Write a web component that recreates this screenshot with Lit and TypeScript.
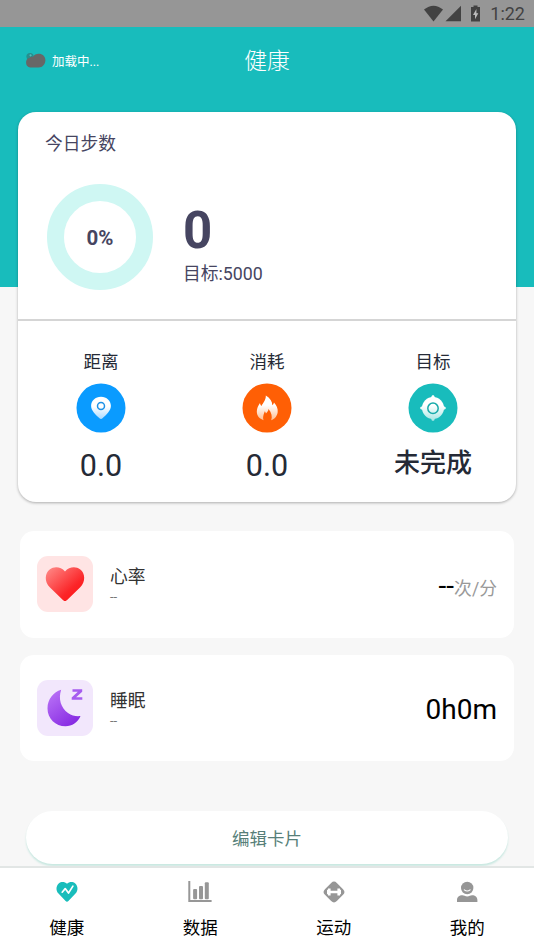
import { LitElement, html, css, svg } from "lit";
import { customElement } from "lit/decorators.js";

const weatherIcon = svg`<svg width="22" height="18" viewBox="0 0 22 18">
  <circle cx="5" cy="5.500" r="3.600" fill="#278e8e"/>
  <circle cx="5.500" cy="4.200" r="1" fill="#52bcbb"/>
  <path d="M5.200 16.500a5 5 0 0 1-.6-9.700C5.500 5.600 6.700 5.500 7.800 5.900 9.100 3.600 11.200 2.700 13.700 2.700c3.700 0 6.700 2.700 6.700 6.300 0 4.300-2.900 7.500-6.700 7.500z" fill="#676767"/>
  <circle cx="5.600" cy="4.600" r=".8" fill="#52bcbb"/></svg>`;

const pinIcon = svg`<svg width="50" height="50" viewBox="0 0 50 50">
  <defs><linearGradient id="p" x1="0" y1="0" x2="0" y2="1"><stop offset=".45" stop-color="#fff"/><stop offset="1" stop-color="#a9d9ff"/></linearGradient></defs>
  <circle cx="25" cy="25" r="24.500" fill="#0a9bff"/>
  <path d="M25 13.700c5.700 0 9.900 4 9.900 9 0 5.200-4.900 9.200-8.400 12.600-.9.900-2.100.9-3 0-3.500-3.400-8.400-7.400-8.400-12.600 0-5 4.200-9 9.900-9z" fill="url(#p)"/>
  <circle cx="25" cy="23" r="3.500" fill="none" stroke="#1d91e6" stroke-width="1.500"/></svg>`;

const flameIcon = svg`<svg width="50" height="50" viewBox="0 0 50 50">
  <defs><linearGradient id="f" x1="0" y1="0" x2="0" y2="1"><stop offset=".4" stop-color="#fff"/><stop offset="1" stop-color="#ffbd91"/></linearGradient></defs>
  <circle cx="25" cy="25" r="24.500" fill="#ff5f05"/>
  <path d="M23.800 12.500c4.200 2.600 6.600 6 6.500 9.700 1-.8 1.500-1.700 1.700-2.700 2.500 2.800 4.100 6.100 3.700 9.500-.4 4.100-3 7.100-6.500 8.200 1.300-3.700.4-7.300-2.700-11.200-.3 2.200-1.200 3.200-2.600 4.400-.2-1-.6-1.600-1.100-2.200-.8 2.700-2.400 5.300-1.200 9-4.200-1.300-6.800-4.400-6.800-8.600 0-3.300 1.500-6 3.200-8.500.2 1.400.7 2.300 1.500 3 1.500-3.400 4.600-6 4.300-10.600z" fill="url(#f)"/></svg>`;

const targetIcon = svg`<svg width="50" height="50" viewBox="0 0 50 50">
  <defs><linearGradient id="t" gradientUnits="userSpaceOnUse" x1="0" y1="12" x2="0" y2="38"><stop offset=".4" stop-color="#fff"/><stop offset="1" stop-color="#a2e5e3"/></linearGradient></defs>
  <circle cx="25" cy="25" r="24.500" fill="#18bcbc"/>
  <g fill="url(#t)">
    <circle cx="25" cy="25" r="11"/>
    <path d="M25 12.200c1 0 1.400.7 1.600 1.600.2 1.200 1.300 1.700 2.600 2.200l4.800 4.800c.5 1.300 1 2.400 2.200 2.600.9.200 1.600.6 1.600 1.600s-.7 1.400-1.600 1.600c-1.200.2-1.700 1.300-2.200 2.600L29.200 34c-1.300.5-2.400 1-2.600 2.200-.2.900-.6 1.600-1.600 1.600s-1.400-.7-1.600-1.600c-.2-1.200-1.300-1.700-2.600-2.200L16 29.200c-.5-1.300-1-2.400-2.200-2.600-.9-.2-1.600-.6-1.600-1.600s.7-1.400 1.600-1.600c1.200-.2 1.700-1.300 2.200-2.600l4.800-4.800c1.300-.5 2.400-1 2.600-2.200.2-.9.600-1.600 1.600-1.600z"/>
  </g>
  <circle cx="25" cy="25.300" r="5.200" fill="none" stroke="#18aaaa" stroke-width="1.500"/></svg>`;

const heartIcon = svg`<svg width="56" height="56" viewBox="0 0 56 56">
  <defs><linearGradient id="h" x1="0" y1=".1" x2=".8" y2=".9"><stop stop-color="#ff8583"/><stop offset=".75" stop-color="#fb2528"/><stop offset="1" stop-color="#ff1719"/></linearGradient></defs>
  <path d="M28 45.100c-1 0-1.500-.5-2.100-1L13 31.600C7 25.500 7.900 17.300 12.700 13.500c4.800-3.700 11.200-2.600 15.300 1.900 4.100-4.500 10.500-5.600 15.300-1.900 4.800 3.800 5.700 12-.3 18.100L30.100 44.100c-.6.500-1.100 1-2.100 1z" fill="url(#h)"/></svg>`;

const moonIcon = svg`<svg width="56" height="56" viewBox="0 0 56 56">
  <defs><linearGradient id="m" x1="0" y1="0" x2=".7" y2="1"><stop stop-color="#bd78f8"/><stop offset="1" stop-color="#872be2"/></linearGradient></defs>
  <path d="M24.200 9.800C21 19 24 28 31 33c4 2.900 8 3.500 12.500 3.100C41 42.500 35 46.300 28.500 46.300 18.500 46.300 10.500 38.500 10.500 28.500c0-9.200 6-16.500 13.700-18.700z" fill="url(#m)"/>
  <path d="M35.500 9.300h9.700v2.400l-6.100 5.600h6.200v2.500H34.700v-2.400l6.100-5.600h-5.300z" fill="#a65cef"/></svg>`;

const healthTab = svg`<svg width="26" height="26" viewBox="0 0 26 26">
  <path d="M13 22.700c-.6 0-1-.3-1.400-.7L4.500 14.600C1.600 11.500 2 6.700 4.700 4.400c2.600-2.200 6-1.900 8.300.3 2.300-2.200 5.700-2.500 8.300-.3 2.700 2.300 3.100 7.100.2 10.200L14.400 22c-.4.400-.8.700-1.400.7z" fill="#19bdbb"/>
  <path d="M8.200 13.200l3-3.600 3.300 4.500 4.400-7" fill="none" stroke="#fff" stroke-width="1.700" stroke-linecap="round" stroke-linejoin="round"/></svg>`;

const dataTab = svg`<svg width="26" height="26" viewBox="0 0 26 26" fill="#979797">
  <path d="M1.300 2h2v19h21.300v2H1.300z"/>
  <rect x="6.100" y="10" width="4" height="10.200" rx="1"/><rect x="12" y="7" width="4" height="13.200" rx="1"/><rect x="17.800" y="3.200" width="4" height="17" rx="1"/></svg>`;

const sportTab = svg`<svg width="26" height="26" viewBox="0 0 26 26">
  <rect x="4.600" y="4.600" width="16.800" height="16.800" rx="4" transform="rotate(45 13 13)" fill="#969696"/>
  <path d="M6 10.700h1V9.600h2.600v2.200h6.800V9.600H19v1.100h1v4.600h-1v1.100h-2.600v-2.200H9.600v2.200H7v-1.100H6z" fill="#fff"/></svg>`;

const mineTab = svg`<svg width="26" height="26" viewBox="0 0 26 26">
  <circle cx="13.200" cy="9" r="6.200" fill="#969696"/>
  <path d="M10.300 10.800q2.900 2.400 5.800 0" fill="none" stroke="#fff" stroke-width="1.100" stroke-linecap="round"/>
  <path d="M3 23v-2c0-2.800 2.200-4.700 5.400-4.700 1.500 0 2.900 1.200 4.800 1.200s3.300-1.200 4.800-1.200c3.200 0 5.400 1.900 5.400 4.700v2z" fill="#969696"/></svg>`;

const metrics = [
  { label: "距离", icon: pinIcon, value: "0.0", kind: "number" },
  { label: "消耗", icon: flameIcon, value: "0.0", kind: "number" },
  { label: "目标", icon: targetIcon, value: "未完成", kind: "word" },
];

const cards = [
  { label: "心率", icon: heartIcon, tone: "rose", value: "--", unit: "次/分" },
  { label: "睡眠", icon: moonIcon, tone: "violet", value: "0h0m", unit: "" },
];

const tabs = [
  { label: "健康", icon: healthTab },
  { label: "数据", icon: dataTab },
  { label: "运动", icon: sportTab },
  { label: "我的", icon: mineTab },
];

@customElement("app-root")
export class AppRoot extends LitElement {
  static styles = css`
    :host {
      display: flex;
      flex-direction: column;
      width: 534px;
      height: 950px;
      overflow: hidden;
      box-sizing: border-box;
      font-family: Roboto, "Noto Sans CJK SC", sans-serif;
      background: #f7f7f7;
      color: #252a36;
    }
    * { box-sizing: border-box; }
    svg { display: block; flex: none; }
    .status {
      height: 27px;
      flex: none;
      display: flex;
      justify-content: flex-end;
      align-items: center;
      padding-right: 9px;
      background: #969696;
      color: #424242;
      font-size: 18px;
      line-height: 27px;
    }
    .clock { margin-left: 8px; }
    .main {
      flex: none;
      height: 839px;
      background: linear-gradient(#18bcbc 0 259.500px, #f7f7f7 259.500px);
      overflow: hidden;
    }
    .header {
      height: 85px;
      display: grid;
      grid-template-columns: 1fr auto 1fr;
      align-items: start;
      padding: 17px 25px 0;
      color: #fff;
    }
    .weather { display: flex; align-items: center; gap: 5px; height: 32px; font-size: 12.500px; }
    .title { font-size: 22.800px; line-height: 34px; padding-top: 1px; font-weight: 300; }
    .summary {
      width: 498px;
      height: 390px;
      margin-left: 18px;
      background: #fff;
      border-radius: 18px;
      box-shadow: 0 1px 3px rgba(0, 0, 0, .3);
    }
    .steps { height: 209px; padding: 19px 27px 0; border-bottom: 2px solid #d5d5d5; color: #464561; }
    .caption { font-size: 17.800px; line-height: 26px; }
    .progress { display: flex; align-items: center; padding: 27px 0 0 2px; gap: 30px; }
    .ring {
      width: 106px;
      height: 106px;
      border: 17px solid #cff7f3;
      border-radius: 50%;
      display: grid;
      place-items: center;
      font-size: 20.500px;
      font-weight: 700;
      padding-top: 1px;
    }
    .count { font-size: 51px; font-weight: 700; line-height: 60px; }
    .goal { font-size: 17.800px; line-height: 26px; }
    .figures { padding-top: 14px; }
    .metrics { display: grid; grid-template-columns: repeat(3, 1fr); padding-top: 28px; }
    .metric { display: flex; flex-direction: column; align-items: center; }
    .name { font-size: 17.500px; line-height: 26px; margin-bottom: 8px; }
    .number { font-size: 30.500px; line-height: 36px; margin-top: 15px; }
    .word { font-size: 26px; line-height: 36px; margin-top: 12px; font-weight: 500; }
    .list { display: flex; flex-direction: column; gap: 17px; padding: 29px 20px 0; }
    .card {
      height: 106.500px;
      display: flex;
      align-items: center;
      padding: 0 17px;
      border-radius: 14px;
      background: #fff;
    }
    .tile { border-radius: 11px; }
    .rose { background: #ffe4e4; }
    .violet { background: #f2e7fc; }
    .info { flex: 1; padding-left: 17px; color: #333; }
    .card-name { font-size: 17.800px; line-height: 26px; }
    .note { font-size: 13px; line-height: 14px; color: #777; }
    .reading { color: #000; font-size: 28px; line-height: 36px; padding-top: 7px; }
    .unit { color: #999; font-size: 17.800px; }
    .edit {
      display: block;
      width: 482px;
      height: 53px;
      margin: 50px 0 0 26px;
      padding: 0;
      border: 0;
      border-radius: 27px;
      background: #fff;
      box-shadow: 0 2px 2px #c9e8e1;
      color: #577f79;
      font: inherit;
      font-size: 17.500px;
    }
    .tabs {
      flex: 1;
      display: grid;
      grid-template-columns: repeat(4, 1fr);
      border-top: 2px solid #e2e6e5;
      background: #fff;
      color: #000;
    }
    .tab {
      display: flex;
      flex-direction: column;
      align-items: center;
      padding-top: 11px;
      gap: 10px;
      font-size: 17.500px;
      line-height: 26px;
    }
  `;

  render() {
    return html`
      <div class="status">
        <svg width="58" height="20" viewBox="0 0 58 20" fill="#424242">
          <path d="M0 5.500Q9.500-2.200 19 5.500L9.500 17.500z"/>
          <path d="M37 1.700v15.500H21.500z"/>
          <path d="M47 3h2.500V1.500h4V3H56v14.500H47z"/>
          <path d="M52.400 5l-3.400 6h2v4.200l3.300-6h-1.900z" fill="#bcbcbc"/>
        </svg>
        <span class="clock">1:22</span>
      </div>
      <div class="main">
        <div class="header">
          <div class="weather">${weatherIcon}<span>加载中...</span></div>
          <div class="title">健康</div>
        </div>
        <div class="summary">
          <div class="steps">
            <div class="caption">今日步数</div>
            <div class="progress">
              <div class="ring">0%</div>
              <div class="figures">
                <div class="count">0</div>
                <div class="goal">目标:5000</div>
              </div>
            </div>
          </div>
          <div class="metrics">
            ${metrics.map((m) => html`<div class="metric">
              <div class="name">${m.label}</div>${m.icon}
              <div class=${m.kind}>${m.value}</div>
            </div>`)}
          </div>
        </div>
        <div class="list">
          ${cards.map((c) => html`<div class="card">
            <div class="tile ${c.tone}">${c.icon}</div>
            <div class="info">
              <div class="card-name">${c.label}</div>
              <div class="note">--</div>
            </div>
            <div class="reading">${c.value}<span class="unit">${c.unit}</span></div>
          </div>`)}
        </div>
        <button class="edit">编辑卡片</button>
      </div>
      <div class="tabs">
        ${tabs.map((t) => html`<div class="tab">${t.icon}<span>${t.label}</span></div>`)}
      </div>
    `;
  }
}
